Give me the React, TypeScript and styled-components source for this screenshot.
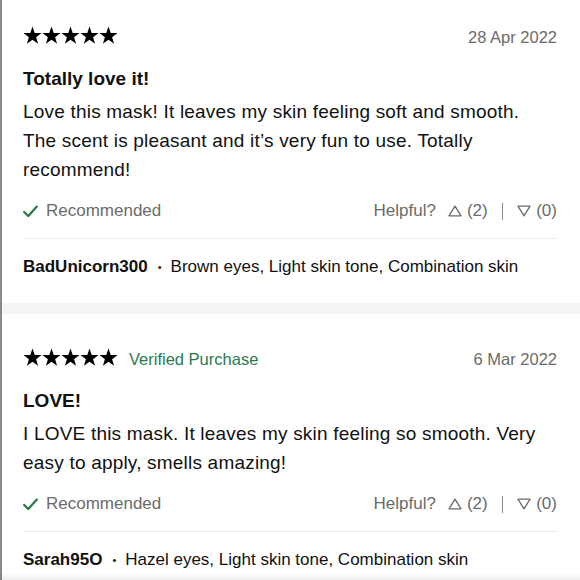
import React from "react";
import styled, { createGlobalStyle } from "styled-components";

const GlobalStyle = createGlobalStyle`
  html, body {
    margin: 0;
    padding: 0;
    background: #ffffff;
  }
  body {
    font-family: "Liberation Sans", Arial, Helvetica, sans-serif;
    color: #111111;
    overflow: hidden;
  }
`;

const Page = styled.div`
  height: 580px;
  overflow: hidden;
  border-left: 2px solid #8a8a8a;
  box-sizing: border-box;
`;

const List = styled.div`
  margin-top: -8px;
  display: flex;
  flex-direction: column;
`;

const Review = styled.article`
  padding: 33px 23px 24px 21px;
  display: flex;
  flex-direction: column;
`;

const Band = styled.div`
  height: 11px;
  background: #f4f4f6;
`;

const Header = styled.div`
  height: 24px;
  display: flex;
  align-items: center;
  justify-content: space-between;
`;

const HeaderLeft = styled.div`
  display: flex;
  align-items: center;
  gap: 11px;
`;

const Stars = styled.div`
  display: flex;
  gap: 0;
  margin-bottom: 4px;
  svg {
    display: block;
  }
`;

const Verified = styled.span`
  font-size: 16.5px;
  color: #2a7a4f;
  line-height: 24px;
`;

const DateText = styled.span`
  font-size: 16.5px;
  color: #6b6b6b;
  line-height: 24px;
`;

const Title = styled.h3`
  margin: 18px 0 0;
  font-size: 19px;
  line-height: 24px;
  font-weight: 700;
  color: #111111;
`;

const Body = styled.p`
  margin: 6px 0 0;
  max-width: 525px;
  font-size: 19px;
  letter-spacing: 0.2px;
  line-height: 29px;
  color: #111111;
`;

const Footer = styled.div`
  margin-top: 15px;
  height: 24px;
  display: flex;
  align-items: center;
  justify-content: space-between;
  font-size: 17px;
  color: #6b6b6b;
`;

const Recommended = styled.span`
  display: flex;
  align-items: center;
  gap: 8px;
  svg {
    display: block;
  }
`;

const Helpful = styled.div`
  display: flex;
  align-items: center;
`;

const HelpfulLabel = styled.span`
  margin-right: 12px;
`;

const Vote = styled.span`
  display: flex;
  align-items: center;
  gap: 5px;
  svg {
    display: block;
  }
`;

const Separator = styled.span`
  width: 1.5px;
  height: 17px;
  margin: 0 14px;
  background: #8a8a8a;
`;

const Divider = styled.hr`
  margin: 15px 0 0;
  border: 0;
  height: 1px;
  background: #ececec;
`;

const Author = styled.div`
  margin-top: 16px;
  height: 24px;
  display: flex;
  align-items: center;
  font-size: 17px;
  color: #111111;
`;

const Name = styled.span`
  font-weight: 700;
`;

const Dot = styled.span`
  font-size: 11px;
  margin: 0 9px 0 10px;
`;

const BottomShade = styled.div`
  position: fixed;
  left: 0;
  right: 0;
  bottom: 0;
  height: 7px;
  background: linear-gradient(to bottom, rgba(0, 0, 0, 0), rgba(0, 0, 0, 0.07));
  pointer-events: none;
`;

const Star = () => (
  <svg width="19" height="19" viewBox="0 0 20 20">
    <path
      d="M10 0.5 L12.35 7.26 L19.51 7.41 L13.8 11.74 L15.88 18.59 L10 14.5 L4.12 18.59 L6.2 11.74 L0.49 7.41 L7.65 7.26 Z"
      fill="#000"
    />
  </svg>
);

const Check = () => (
  <svg width="15" height="13" viewBox="0 0 15 13">
    <path d="M1.2 7 L5.3 11 L13.8 1.6" fill="none" stroke="#2a7a4f" strokeWidth="2.3" strokeLinecap="round" strokeLinejoin="round" />
  </svg>
);

const Triangle = ({ down }: { down?: boolean }) => (
  <svg width="14" height="12" viewBox="0 0 14 12">
    {down ? (
      <path d="M1 1.2 H13 L7 10.8 Z" fill="none" stroke="#6b6b6b" strokeWidth="1.3" strokeLinejoin="round" />
    ) : (
      <path d="M1 10.8 H13 L7 1.2 Z" fill="none" stroke="#6b6b6b" strokeWidth="1.3" strokeLinejoin="round" />
    )}
  </svg>
);

type ReviewData = {
  date: string;
  verified?: boolean;
  title: string;
  body: string;
  up: number;
  down: number;
  name: string;
  details: string;
};

const reviews: ReviewData[] = [
  {
    date: "28 Apr 2022",
    title: "Totally love it!",
    body: "Love this mask! It leaves my skin feeling soft and smooth. The scent is pleasant and it\u2019s very fun to use. Totally recommend!",
    up: 2,
    down: 0,
    name: "BadUnicorn300",
    details: "Brown eyes, Light skin tone, Combination skin",
  },
  {
    date: "6 Mar 2022",
    verified: true,
    title: "LOVE!",
    body: "I LOVE this mask. It leaves my skin feeling so smooth. Very easy to apply, smells amazing!",
    up: 2,
    down: 0,
    name: "Sarah95O",
    details: "Hazel eyes, Light skin tone, Combination skin",
  },
];

const ReviewCard = ({ r }: { r: ReviewData }) => (
  <Review>
    <Header>
      <HeaderLeft>
        <Stars>
          {[0, 1, 2, 3, 4].map((i) => (
            <Star key={i} />
          ))}
        </Stars>
        {r.verified && <Verified>Verified Purchase</Verified>}
      </HeaderLeft>
      <DateText>{r.date}</DateText>
    </Header>
    <Title>{r.title}</Title>
    <Body>{r.body}</Body>
    <Footer>
      <Recommended>
        <Check />
        Recommended
      </Recommended>
      <Helpful>
        <HelpfulLabel>Helpful?</HelpfulLabel>
        <Vote>
          <Triangle />({r.up})
        </Vote>
        <Separator />
        <Vote>
          <Triangle down />({r.down})
        </Vote>
      </Helpful>
    </Footer>
    <Divider />
    <Author>
      <Name>{r.name}</Name>
      <Dot>•</Dot>
      <span>{r.details}</span>
    </Author>
  </Review>
);

export default function App() {
  return (
    <>
      <GlobalStyle />
      <Page>
        <List>
          {reviews.map((r, i) => (
            <React.Fragment key={i}>
              {i > 0 && <Band />}
              <ReviewCard r={r} />
            </React.Fragment>
          ))}
        </List>
      </Page>
      <BottomShade />
    </>
  );
}
